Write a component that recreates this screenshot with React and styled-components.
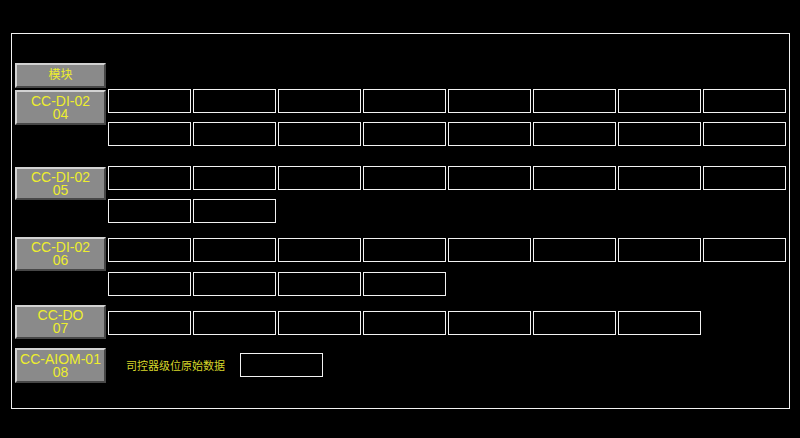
import React from "react";
import styled, { createGlobalStyle } from "styled-components";

const Global = createGlobalStyle`
  html, body { margin: 0; padding: 0; background: #000; }
  body { width: 800px; height: 438px; overflow: hidden; font-family: "Liberation Sans", "Noto Sans CJK SC", sans-serif; }
`;

const Frame = styled.div`
  box-sizing: border-box;
  margin: 33px 0 0 11px;
  width: 779px;
  height: 376px;
  border: 1px solid #f2f2f2;
  padding: 29px 0 0 3px;
`;

const Group = styled.div`
  display: flex;
  align-items: flex-start;
  gap: 2px;
  margin-top: ${(p) => p.$mt || 0}px;
`;

const ModuleButton = styled.div`
  box-sizing: border-box;
  width: 91px;
  height: ${(p) => p.$h || 34}px;
  margin-top: ${(p) => p.$mt || 0}px;
  background: #8a8a8a;
  border-top: 2px solid #d2d2d2;
  border-left: 2px solid #d2d2d2;
  border-bottom: 2px solid #474747;
  border-right: 2px solid #474747;
  color: #eeee2e;
  font-family: "Liberation Sans", "Noto Sans CJK SC", sans-serif;
  font-size: ${(p) => (p.$small ? 12 : 14)}px;
  line-height: 13px;
  text-align: center;
  display: flex;
  flex-direction: column;
  justify-content: center;
  align-items: center;
  white-space: nowrap;
`;

const CellGrid = styled.div`
  display: grid;
  grid-template-columns: repeat(8, 83px);
  column-gap: 2px;
  row-gap: ${(p) => p.$rg || 9}px;
  margin-top: ${(p) => p.$mt || 0}px;
`;

const Cell = styled.div`
  box-sizing: border-box;
  width: 83px;
  height: 24px;
  border: 1px solid #f2f2f2;
`;

const InfoRow = styled.div`
  display: flex;
  align-items: center;
  margin-top: ${(p) => p.$mt || 0}px;
  padding-left: 18px;
`;

const Label = styled.span`
  color: #d6d62a;
  font-family: "Noto Sans CJK SC", sans-serif;
  font-size: 11px;
  line-height: 24px;
  width: 98px;
  margin-right: 16px;
  white-space: nowrap;
`;

const cells = (n) => Array.from({ length: n }, (_, i) => <Cell key={i} />);

const groups = [
  { mt: 1, name: "CC-DI-02", num: "04", h: 35, bmt: 1, cmt: 0, rg: 9, count: 16 },
  { mt: 20, name: "CC-DI-02", num: "05", h: 33, bmt: 1, cmt: 0, rg: 9, count: 10 },
  { mt: 14, name: "CC-DI-02", num: "06", h: 34, bmt: 0, cmt: 1, rg: 10, count: 12 },
  { mt: 9, name: "CC-DO", num: "07", h: 34, bmt: 0, cmt: 6, rg: 9, count: 7 },
];

export default function App() {
  return (
    <>
      <Global />
      <Frame>
        <ModuleButton $h={25} $small>模块</ModuleButton>
        {groups.map((g) => (
          <Group key={g.num} $mt={g.mt}>
            <ModuleButton $h={g.h} $mt={g.bmt}>
              <span>{g.name}</span>
              <span>{g.num}</span>
            </ModuleButton>
            <CellGrid $mt={g.cmt} $rg={g.rg}>
              {cells(g.count)}
            </CellGrid>
          </Group>
        ))}
        <Group $mt={9}>
          <ModuleButton $h={35}>
            <span>CC-AIOM-01</span>
            <span>08</span>
          </ModuleButton>
          <InfoRow $mt={5}>
            <Label>司控器级位原始数据</Label>
            <Cell />
          </InfoRow>
        </Group>
      </Frame>
    </>
  );
}
